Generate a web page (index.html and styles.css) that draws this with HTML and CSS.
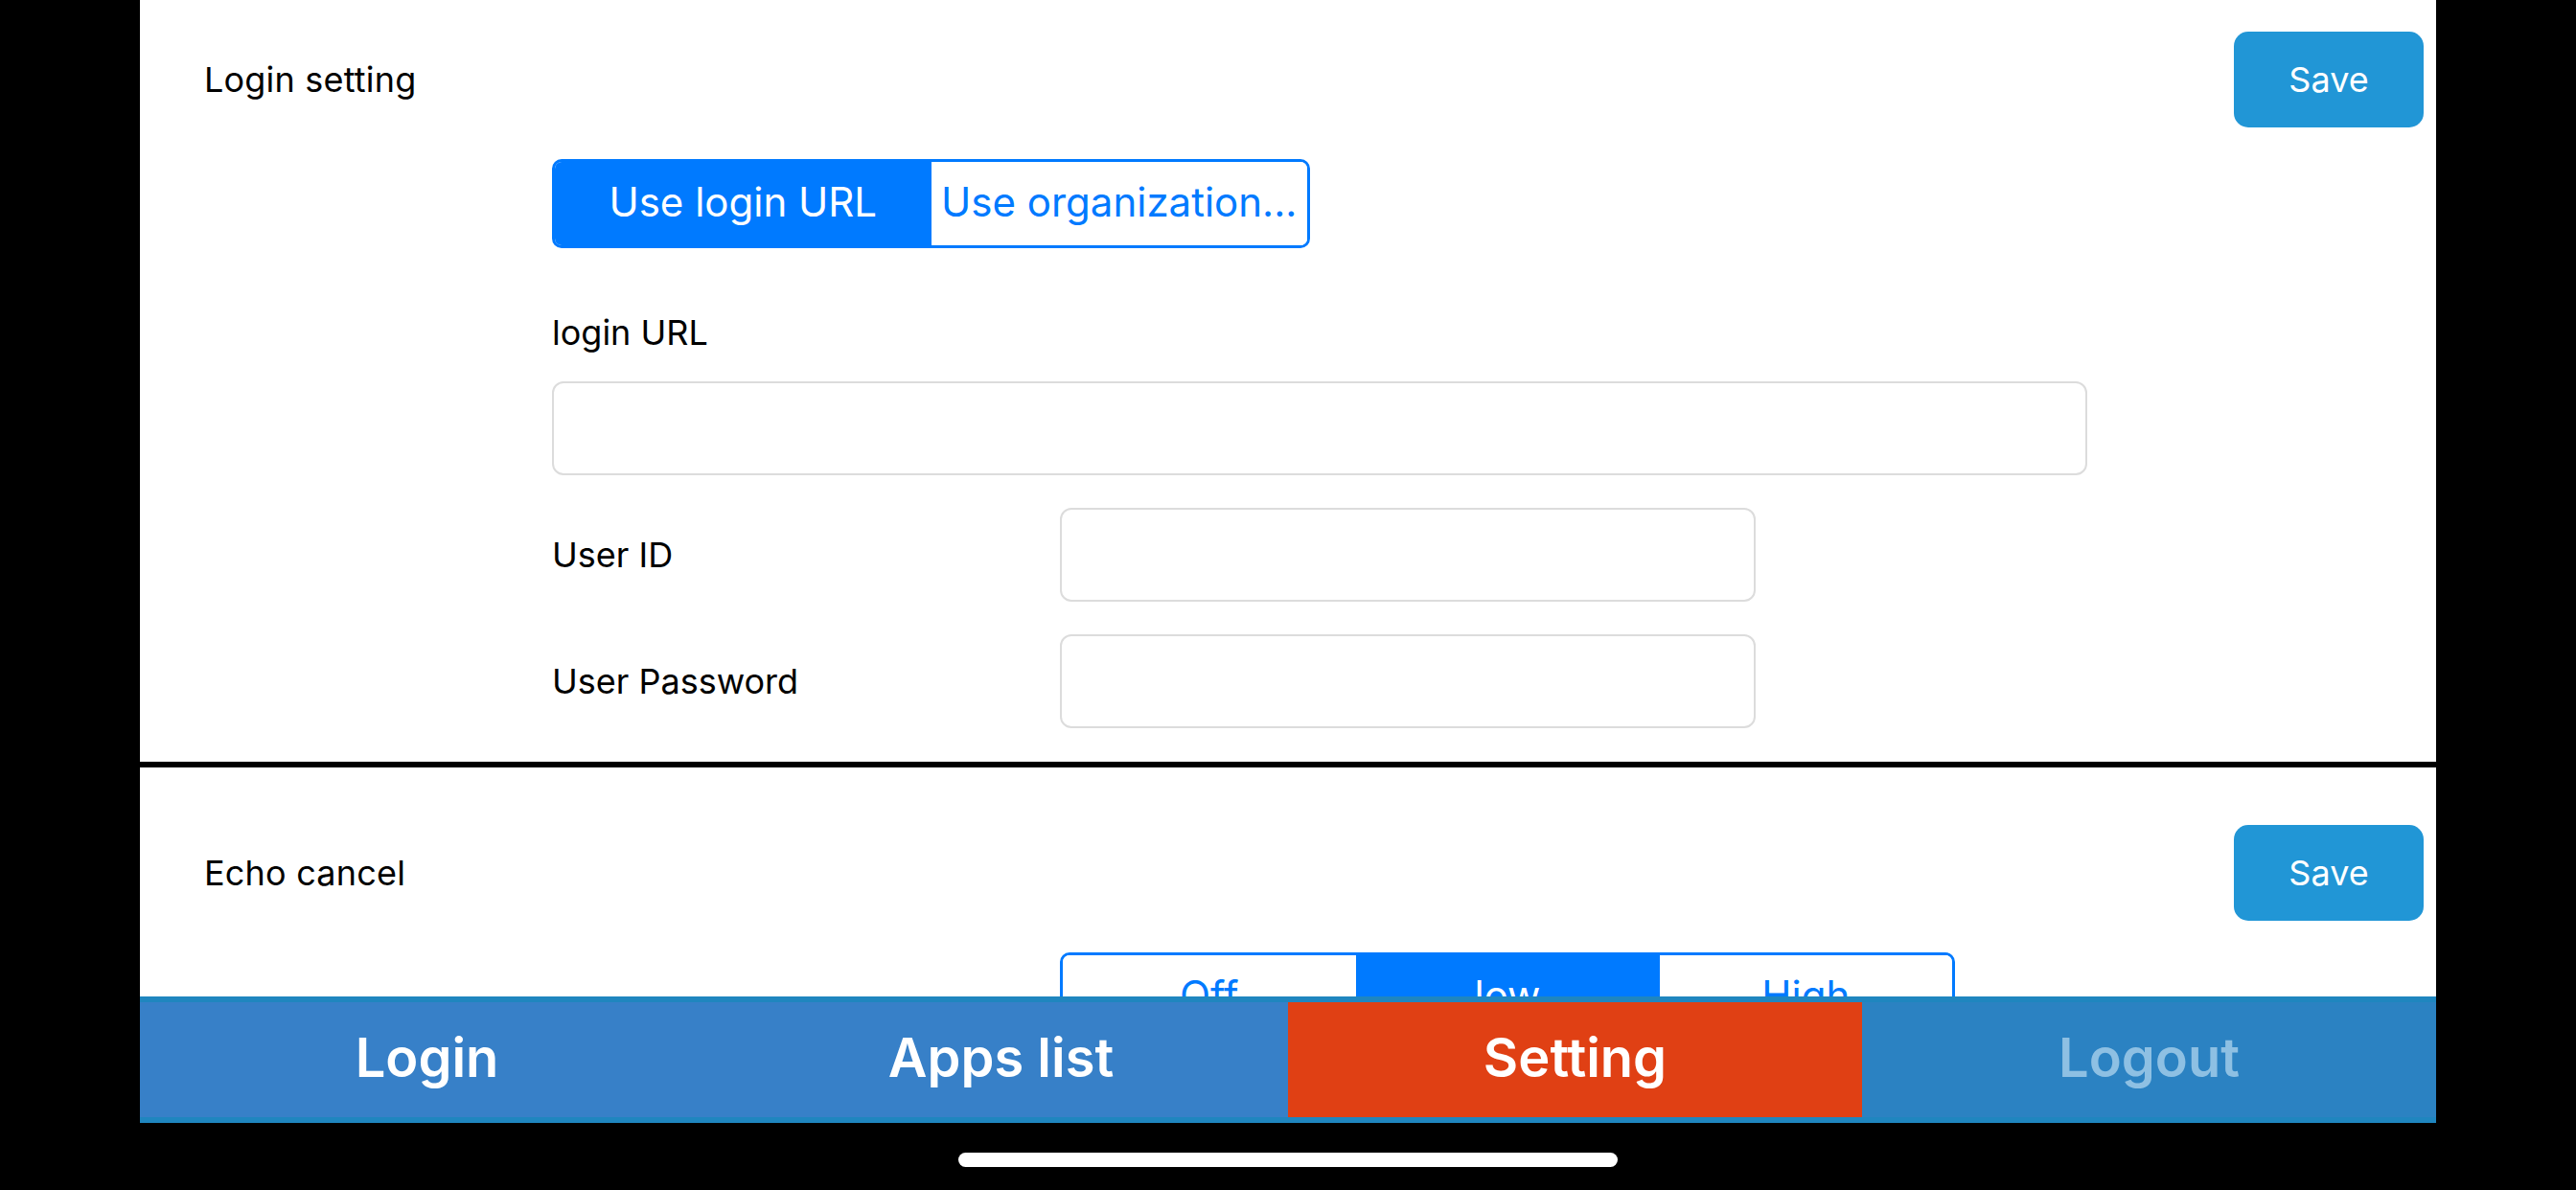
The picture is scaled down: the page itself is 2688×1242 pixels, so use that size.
FILE: index.html
```html
<!DOCTYPE html>
<html lang="en">
<head>
<meta charset="utf-8">
<title>Setting</title>
<link rel="stylesheet" href="styles.css">
</head>
<body>
<div class="app">
  <main class="scroll">
    <div class="scroll-content">
      <section class="card">
        <div class="card-head">
          <span class="card-title">Login setting</span>
          <button class="save-btn">Save</button>
        </div>
        <div class="card-body">
          <div class="segment seg-login">
            <span class="seg-item selected">Use login URL</span>
            <span class="seg-item">Use organization...</span>
          </div>
          <div class="field-label">login URL</div>
          <div class="input input-wide"></div>
          <div class="row">
            <span class="row-label">User ID</span>
            <div class="input input-short"></div>
          </div>
          <div class="row">
            <span class="row-label">User Password</span>
            <div class="input input-short"></div>
          </div>
        </div>
      </section>
      <section class="card">
        <div class="card-head">
          <span class="card-title">Echo cancel</span>
          <button class="save-btn">Save</button>
        </div>
        <div class="card-body">
          <div class="segment seg-echo">
            <span class="seg-item">Off</span>
            <span class="seg-item selected seg-mid">low</span>
            <span class="seg-item">High</span>
          </div>
        </div>
      </section>
    </div>
  </main>
  <nav class="tabbar">
    <div class="tab tab-login">Login</div>
    <div class="tab tab-apps">Apps list</div>
    <div class="tab tab-setting">Setting</div>
    <div class="tab tab-logout">Logout</div>
  </nav>
  <div class="home-area"><div class="home-indicator"></div></div>
</div>
</body>
</html>
```
FILE: styles.css
```css
* { box-sizing: border-box; }
html, body {
  margin: 0;
  padding: 0;
  background: #000;
  width: 2688px;
  height: 1242px;
  overflow: hidden;
  font-family: "Inter", "Roboto", "Liberation Sans", sans-serif;
}
.app {
  width: 2396px;
  margin: 0 146px;
  height: 1242px;
  display: flex;
  flex-direction: column;
}
.scroll {
  height: 1040px;
  flex: 0 0 1040px;
  overflow: hidden;
  background: #fff;
}
.scroll-content {
  margin-top: -27px;
}
.card {
  padding: 60px 13px 35px 67px;
  background: #fff;
}
.card + .card {
  border-top: 6px solid #000;
}
.card-head {
  display: flex;
  align-items: center;
  justify-content: space-between;
  height: 100px;
}
.card-title {
  font-size: 36px;
  color: #000;
  letter-spacing: 0.2px;
}
.save-btn {
  width: 198px;
  height: 100px;
  border: 0;
  border-radius: 15px;
  background: #2196d6;
  color: #fff;
  font-family: inherit;
  font-size: 36px;
  padding: 0;
}
.card-body {
  padding-left: 363px;
}
.segment {
  margin-top: 33px;
  display: flex;
  height: 93px;
  border: 3px solid #007aff;
  border-radius: 10px;
  overflow: hidden;
}
.seg-item {
  flex: 1;
  display: flex;
  align-items: center;
  justify-content: center;
  color: #007aff;
  background: #fff;
  font-size: 42px;
  white-space: nowrap;
  padding-bottom: 4px;
}
.seg-item.selected {
  background: #007aff;
  color: #fff;
}
.seg-login {
  width: 791px;
}
.seg-echo {
  width: 934px;
  margin-left: 530px;
}
.seg-echo .seg-mid {
  flex: 0 0 317px;
}
.field-label {
  margin-top: 65px;
  height: 46px;
  line-height: 46px;
  font-size: 36px;
  color: #000;
}
.input {
  height: 98px;
  border: 2px solid #dcdcdc;
  border-radius: 12px;
  background: #fff;
}
.input-wide {
  margin-top: 28px;
  width: 1602px;
}
.row {
  display: flex;
  align-items: center;
  margin-top: 34px;
}
.row-label {
  width: 530px;
  font-size: 36px;
  color: #000;
}
.input-short {
  width: 726px;
}
.tabbar {
  flex: 0 0 132px;
  display: flex;
  border-top: 6px solid #1f86bf;
  border-bottom: 6px solid #1f86bf;
}
.tab {
  flex: 1;
  display: flex;
  align-items: center;
  justify-content: center;
  font-size: 56px;
  font-weight: 600;
  color: #fff;
  background: #3780c8;
  padding-bottom: 4px;
}
.tab-setting {
  background: #e04014;
}
.tab-logout {
  background: #2b82c2;
  color: #8ec0e3;
}
.home-area {
  flex: 1;
  display: flex;
  justify-content: center;
  padding-top: 31px;
  margin: 0 -146px;
}
.home-indicator {
  width: 688px;
  height: 15px;
  border-radius: 8px;
  background: #fff;
}
```
